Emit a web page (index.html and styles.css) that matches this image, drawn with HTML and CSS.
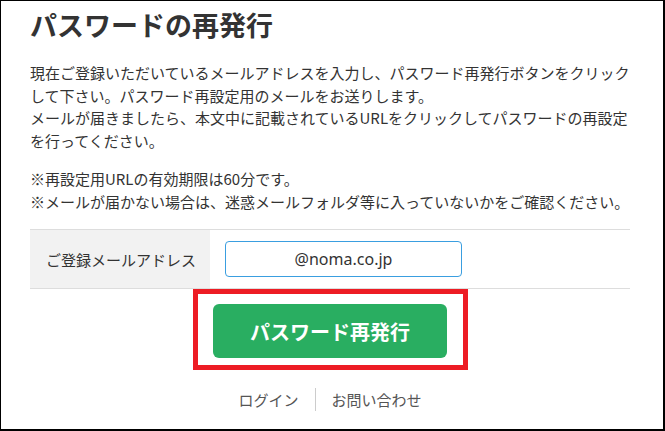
FILE: index.html
```html
<!DOCTYPE html>
<html lang="ja">
<head>
<meta charset="utf-8">
<title>パスワードの再発行</title>
<link rel="stylesheet" href="styles.css">
</head>
<body>
<div class="frame">
  <div class="content">
    <h1 class="title">パスワードの再発行</h1>
    <p class="text">現在ご登録いただいているメールアドレスを入力し、パスワード再発行ボタンをクリックして下さい。パスワード再設定用のメールをお送りします。<br>メールが届きましたら、本文中に記載されているURLをクリックしてパスワードの再設定を行ってください。</p>
    <p class="text note">※再設定用URLの有効期限は60分です。<br>※メールが届かない場合は、迷惑メールフォルダ等に入っていないかをご確認ください。</p>
    <div class="form-row">
      <div class="label">ご登録メールアドレス</div>
      <div class="field"><input class="input" type="text" value="@noma.co.jp"></div>
    </div>
    <div class="actions">
      <div class="btn-wrap">
        <button class="btn" type="button">パスワード再発行</button>
        <span class="highlight"></span>
      </div>
    </div>
    <div class="links">
      <a class="link" href="#">ログイン</a>
      <a class="link sep" href="#">お問い合わせ</a>
    </div>
  </div>
</div>
</body>
</html>
```

FILE: styles.css
```css
* { box-sizing: border-box; }
html, body { margin: 0; padding: 0; background: #fff; }
body {
  font-family: "Noto Sans CJK JP", "Noto Sans", sans-serif;
  color: #333;
}
.frame {
  width: 665px;
  height: 431px;
  border-left: 1px solid #000;
  border-top: 1px solid #000;
  border-right: 2px solid #000;
  border-bottom: 2px solid #000;
  overflow: hidden;
}
.content {
  width: 600px;
  margin-left: 29px;
}
.title {
  margin: 6px 0 0;
  font-size: 27px;
  line-height: 36px;
  font-weight: bold;
  color: #333;
}
.text {
  margin: 19px 0 0;
  font-size: 15px;
  line-height: 22.5px;
}
.note { margin-top: 16px; }
.form-row {
  display: flex;
  margin-top: 16px;
  border-top: 1px solid #ddd;
  border-bottom: 1px solid #ddd;
  height: 60px;
}
.label {
  width: 180px;
  background: #f2f2f2;
  display: flex;
  align-items: center;
  padding-left: 16px;
  font-size: 15px;
}
.field {
  display: flex;
  align-items: center;
  padding-left: 15px;
}
.input {
  width: 237px;
  height: 36px;
  border: 1px solid #3a9ee0;
  border-radius: 4px;
  font-family: "Noto Sans", "Noto Sans CJK JP", sans-serif;
  font-size: 16px;
  color: #333;
  text-align: center;
  padding: 0 8px;
  outline: none;
}
.actions {
  display: flex;
  justify-content: center;
  margin-top: 15px;
}
.btn-wrap { position: relative; }
.btn {
  display: block;
  width: 234px;
  height: 54px;
  border: none;
  border-radius: 6px;
  background: #29ae61;
  color: #fff;
  font-family: "Noto Sans CJK JP", sans-serif;
  font-size: 20px;
  font-weight: bold;
  cursor: pointer;
}
.highlight {
  position: absolute;
  left: -20px;
  top: -15px;
  width: 275px;
  height: 81px;
  border: 5px solid #ed1c24;
  pointer-events: none;
}
.links {
  display: flex;
  justify-content: center;
  margin-top: 30px;
}
.link {
  font-size: 15px;
  line-height: 23px;
  color: #555;
  text-decoration: none;
  padding: 0 16px;
}
.sep { border-left: 1px solid #ccc; }
```
